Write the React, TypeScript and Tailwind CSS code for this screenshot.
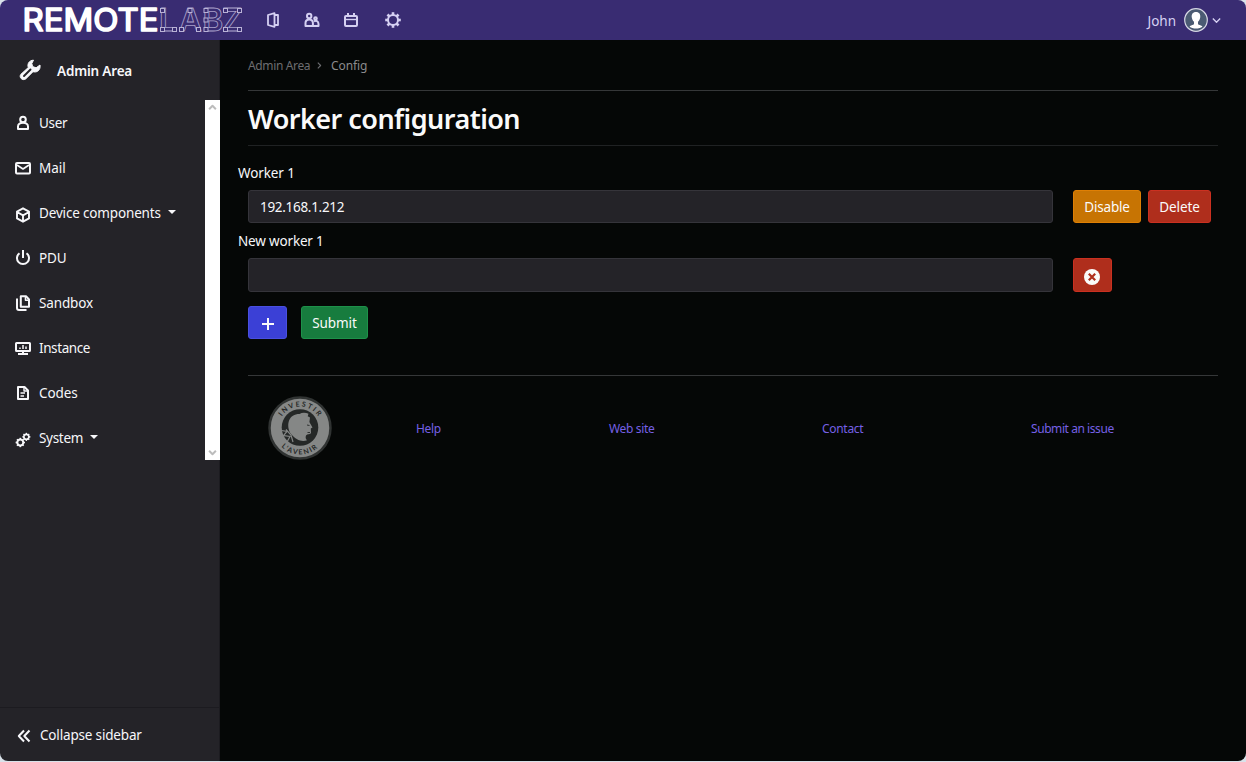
import React from 'react';

type IconProps = { className?: string; children: React.ReactNode };

function Icon({ className = 'size-4', children }: IconProps) {
  return (
    <svg viewBox="0 0 16 16" className={`shrink-0 ${className}`} fill="none" stroke="currentColor" strokeWidth="2" strokeLinejoin="round">
      {children}
    </svg>
  );
}

function GearShape({ ring = 2 }: { ring?: number }) {
  const angles = [0, 45, 90, 135, 180, 225, 270, 315];
  return (
    <>
      <circle cx="8" cy="8" r="5" strokeWidth={ring} />
      {angles.map((a) => (
        <path key={a} d="M8 3V.2" strokeWidth="2.6" transform={`rotate(${a} 8 8)`} />
      ))}
    </>
  );
}

function Wordmark() {
  const nodes = [
    [160.5, 8.5], [160.5, 27.5], [172.5, 27.5], [188, 8.5], [179.5, 27.5], [196.5, 27.5],
    [204, 8.5], [204, 18], [204, 27.5], [223.5, 8.5], [237.5, 8.5], [223.5, 27.5], [237.5, 27.5],
  ];
  return (
    <svg viewBox="0 0 250 40" className="h-10 w-[250px] shrink-0" aria-label="RemoteLabz">
      <text x="22.5" y="31" fontFamily="Inter, sans-serif" fontSize="31" fontWeight="400" textLength="136" lengthAdjust="spacingAndGlyphs" fill="#fff" stroke="#fff" strokeWidth="1.600" strokeLinejoin="round">REMOTE</text>
      <text x="159 179 202.500 222" y="31.300" fontFamily="Inter, sans-serif" fontSize="31.500" fontWeight="600" fill="none" stroke="#a9a1cb" strokeWidth="0.8">LABZ</text>
      {nodes.map(([x, y]) => (
        <rect key={`${x}-${y}`} x={x} y={y} width="4" height="4" fill="#392c72" stroke="#b9b2d6" strokeWidth="1" />
      ))}
    </svg>
  );
}

function TopBar() {
  return (
    <header className="flex h-10 shrink-0 items-center bg-[#392c72] text-[#d5d0f2]">
      <Wordmark />
      <nav className="flex items-center pl-[15px]">
        <Icon><path d="M9.500 1.200 3 3v10l6.500 1.800zM9.500 3H13v10H9.500" strokeWidth="1.800" /></Icon>
        <Icon className="ml-[23px] size-4">
          <circle cx="5.2" cy="4" r="2.2" />
          <path d="M1.5 14V11c0-4.8 7.4-4.8 7.4 0v3z" />
          <circle cx="11.5" cy="6.5" r="1.3" />
          <path d="M9 14h5.5v-2c0-3-2.5-4-4.5-2.5" />
        </Icon>
        <Icon className="ml-[23px] size-4"><rect x="2" y="4" width="12" height="10" rx="1" /><path d="M2 7.5h12" strokeWidth="1.4" /><path d="M5 1v3M11 1v3" /></Icon>
        <Icon className="ml-[26px] size-4"><GearShape /></Icon>
      </nav>
      <div className="ml-auto flex items-center pr-[25px]">
        <span className="mt-0.5 text-[13.5px]">John</span>
        <svg viewBox="0 0 24 24" className="ml-2 size-6">
          <circle cx="12" cy="12" r="11.3" fill="#4b5b73" stroke="#d6d7e4" strokeWidth="1.2" />
          <path d="M12 4C8.7 4 7.3 6.4 7.8 9.6c.3 2 1.1 3.2 2.2 4.2v2.4c-1 1-3.4 1-4.5 2.2C8.700 21.200 15.300 21.200 18.500 18.400c-1.100-1.200-3.500-1.200-4.500-2.200v-2.400c1.100-1 1.900-2.200 2.200-4.200C16.700 6.400 15.300 4 12 4z" fill="#fff" />
        </svg>
        <Icon className="ml-1 size-[9px]"><path d="m1.500 4.500 6.500 6.500 6.500-6.500" strokeWidth="2.400" /></Icon>
      </div>
    </header>
  );
}

type Item = { label: string; icon: React.ReactNode; tracking: string; caret?: boolean };

const items: Item[] = [
  { label: 'User', tracking: 'tracking-[-0.3px]', icon: <Icon><circle cx="8" cy="4.500" r="2.800" /><path d="M3 14v-2.500c0-5 10-5 10 0V14z" /></Icon> },
  { label: 'Mail', tracking: 'tracking-[-0.05px]', icon: <Icon><rect x="1" y="3" width="14" height="10.500" rx="1" /><path d="m2 5 6 4 6-4" strokeWidth="1.700" /></Icon> },
  { label: 'Device components', tracking: 'tracking-[-0.16px]', caret: true, icon: <Icon className="mt-1 size-4"><path d="m8 1.300 6 3.300v6.800l-6 3.300-6-3.300V4.600zM2 5l6 3.300L14 5M8 8.300v6" strokeWidth="1.900" /></Icon> },
  { label: 'PDU', tracking: 'tracking-[-0.15px]', icon: <Icon><path d="M4.500 3.200a6 6 0 1 0 7 0M8 0v8" /></Icon> },
  { label: 'Sandbox', tracking: 'tracking-[-0.15px]', icon: <Icon><path d="M5.800 1.200h5.200L14 4.500v7.300H5.800z" /><path d="M2 3.500v9.500q0 2 2 2h7.500" /><path d="M10.500 1v4.300H14" strokeWidth="1.600" /></Icon> },
  { label: 'Instance', tracking: 'tracking-[-0.4px]', icon: <Icon><rect x="1" y="3" width="14" height="8" rx=".5" /><path d="M8 11v3M3 14h10" /><path d="M5 9V7.500M8 9V5M11 9V6.500" strokeWidth="1.500" /></Icon> },
  { label: 'Codes', tracking: 'tracking-[-0.1px]', icon: <Icon><path d="M3 2h6.500L13 5.500V14H3z" /><path d="M5.500 8H10M5.500 11H9M9 2v4h4" strokeWidth="1.400" /></Icon> },
  {
    label: 'System', tracking: 'tracking-[-0.3px]', caret: true,
    icon: (
      <Icon className="mt-1 size-4">
        <g transform="translate(.5 5.700) scale(.6)"><GearShape ring={3.4} /></g>
        <g transform="translate(7.200 .700) scale(.52)"><GearShape ring={3.4} /></g>
      </Icon>
    ),
  },
];

function Sidebar() {
  return (
    <aside className="flex w-[220px] shrink-0 flex-col border-r border-[#1c1b20] bg-[#242328] text-[#f7f7fa]">
      <div className="flex h-[60px] items-center pl-[19px]">
        <svg viewBox="0 0 22 22" className="size-[22px]" fill="none">
          <path d="M14.500 1.200C10.300 1.200 8 4.800 9.300 8.500L1.900 15.300c-2.300 2.900 1.400 7 4.800 4.600l7.300-7.200c4 1.200 7.800-1.500 7-6.700l-3.900 2.800-3.500-1.200-.8-3.200z" fill="currentColor" stroke="currentColor" strokeLinejoin="round" />
          <path d="m5 17 6.500-6.500" stroke="#242328" strokeWidth="1.900" strokeLinecap="round" />
        </svg>
        <span className="mt-0.5 ml-4 text-[13.5px] font-semibold tracking-[-0.18px]">Admin Area</span>
      </div>
      <div className="-mr-px flex h-[360px]">
        <ul className="flex-1">
          {items.map((it) => (
            <li key={it.label} className="flex h-[45px] items-center pl-[15px] text-[13.5px]">
              {it.icon}
              <span className={`mt-px ml-2 ${it.tracking}`}>{it.label}</span>
              {it.caret && <svg viewBox="0 0 8 4" className="mb-0.5 ml-[7px] h-1 w-2"><path d="M0 0h8L4 4z" fill="currentColor" /></svg>}
            </li>
          ))}
        </ul>
        <div className="flex w-[15px] flex-col items-center justify-between bg-white py-[3px] text-[#bcbcbc]">
          <Icon className="size-[9px]"><path d="m2 11 6-6 6 6" strokeWidth="3.500" /></Icon>
          <Icon className="size-[9px]"><path d="m2 5 6 6 6-6" strokeWidth="3.500" /></Icon>
        </div>
      </div>
      <div className="mt-auto flex h-[54px] items-center border-t border-[#1c1b20] pl-4 text-[13.5px]">
        <Icon className="mt-0.5 size-4"><path d="M8 2.500 2.800 8 8 13.500M13.500 2.500 8.300 8l5.200 5.500" /></Icon>
        <span className="mt-px ml-2 tracking-[-0.17px]">Collapse sidebar</span>
      </div>
    </aside>
  );
}

function Button({ className, children }: { className: string; children: React.ReactNode }) {
  return <button className={`flex items-center justify-center rounded-[3px] border text-[13.5px] text-[#fafafa] ${className}`}>{children}</button>;
}

function Seal() {
  return (
    <svg viewBox="0 0 64 64" className="size-16">
      <defs>
        <path id="seal-top" d="M10.500 32a21.500 21.500 0 0 1 43 0" />
        <path id="seal-bottom" d="M5.500 32a26.500 26.500 0 0 0 53 0" />
      </defs>
      <circle cx="32" cy="32" r="30.500" fill="#858786" stroke="#303332" strokeWidth="2.500" />
      <circle cx="32" cy="31.500" r="18.300" fill="#252827" />
      <path d="M22 36.500C18 28 21 18 31.500 18c2.500-1.500 6-1.500 9-.2l-.8 2.400 2.300 1.300-.6 4.500 3.100 5.500-1.700 1 .2 4.500c-.7 1.700-3.500.7-5 2.500-.8 2-.2 3.500 1 4.800-5 1.800-11 .2-17-7.500z" fill="#858786" />
      <path d="m13.500 34.500 5.500 1-3.500 4 6.500 1-3 5.500M18 33.500l5 5.500 2 7" fill="none" stroke="#858786" strokeWidth="1.200" />
      <path d="m39 29 2.500.5m-2 7h2.500" stroke="#303332" strokeWidth="1" />
      <g fill="#252827" fontFamily="Lato, sans-serif" fontSize="7" fontWeight="700" textAnchor="middle">
        <text letterSpacing="1.700"><textPath href="#seal-top" startOffset="51%">INVESTIR</textPath></text>
        <text letterSpacing="1.500"><textPath href="#seal-bottom" startOffset="50%">L’AVENIR</textPath></text>
      </g>
    </svg>
  );
}

function Main() {
  return (
    <main className="flex-1 bg-[#050706] px-7 text-[#f7f7fa]">
      <nav className="flex h-[50px] items-center pt-0.5 text-xs text-[#6d6d70]">
        <span className="w-[63px] tracking-[-0.36px] whitespace-nowrap">Admin Area</span>
        <Icon className="mx-1 mb-0.5 size-[9px]"><path d="m5 3 5 5-5 5" /></Icon>
        <span className="ml-[3px] tracking-[-0.1px] text-[#8b8b8d]">Config</span>
      </nav>
      <h1 className="flex h-14 items-center border-y border-t-[#353738] border-b-[#202223] pt-[3px] text-[27px] font-semibold tracking-[-0.53px] text-[#fafafa]">Worker configuration</h1>
      <label className="mt-[17px] -ml-2.5 block h-[27px] text-[13.5px] leading-[21px] tracking-[-0.1px]">Worker 1</label>
      <div className="flex h-[33px]">
        <input readOnly defaultValue="192.168.1.212" className="w-[805px] rounded-[3px] border border-[#35343a] bg-[#242328] px-[11px] pt-px text-[13.5px] tracking-[-0.3px]" />
        <Button className="ml-5 w-[68px] border-[#df7f04] bg-[#c77403] pt-0.5 tracking-[-0.17px]">Disable</Button>
        <Button className="ml-[7px] w-[63px] border-[#cb3020] bg-[#af2e1c] pt-0.5 tracking-[-0.1px]">Delete</Button>
      </div>
      <label className="mt-2 -ml-2.5 block h-[27px] text-[13.5px] leading-[21px] tracking-[-0.17px]">New worker 1</label>
      <div className="flex h-[34px]">
        <input className="w-[805px] rounded-[3px] border border-[#35343a] bg-[#242328] px-[11px] text-sm" />
        <Button className="ml-5 w-[39px] border-[#cb3020] bg-[#af2e1c] pt-1 pr-0.5">
          <Icon><circle cx="8" cy="8" r="8" fill="#fafafa" stroke="none" /><path d="m4.800 4.800 6.400 6.400m0-6.400-6.400 6.400" stroke="#af2e1c" strokeWidth="2.200" /></Icon>
        </Button>
      </div>
      <div className="mt-3.5 flex h-[33px] gap-3.5">
        <Button className="w-[39px] border-[#494fdf] bg-[#3b40d6] pt-0.5"><Icon><path d="M8 2v12M2 8h12" /></Icon></Button>
        <Button className="w-[67px] border-[#1d9149] bg-[#177c3e] pt-0.5 tracking-[-0.1px]">Submit</Button>
      </div>
      <footer className="mt-9 flex h-[105px] items-center border-t border-[#353738] pl-5 text-xs text-[#7560e5]">
        <Seal />
        <a className="mt-0.5 ml-[84px] w-[193px] tracking-[-0.3px]">Help</a>
        <a className="mt-0.5 w-[213px] tracking-[-0.35px]">Web site</a>
        <a className="mt-0.5 w-[209px] tracking-[-0.3px]">Contact</a>
        <a className="mt-0.5 tracking-[-0.43px]">Submit an issue</a>
      </footer>
    </main>
  );
}

export default function App() {
  return (
    <div className="h-[762px] w-[1246px] bg-[#d9e2ea] font-['Noto_Sans','Open_Sans',sans-serif]">
      <div className="flex h-[761px] flex-col overflow-hidden rounded-lg">
        <TopBar />
        <div className="flex min-h-0 flex-1">
          <Sidebar />
          <Main />
        </div>
      </div>
    </div>
  );
}
